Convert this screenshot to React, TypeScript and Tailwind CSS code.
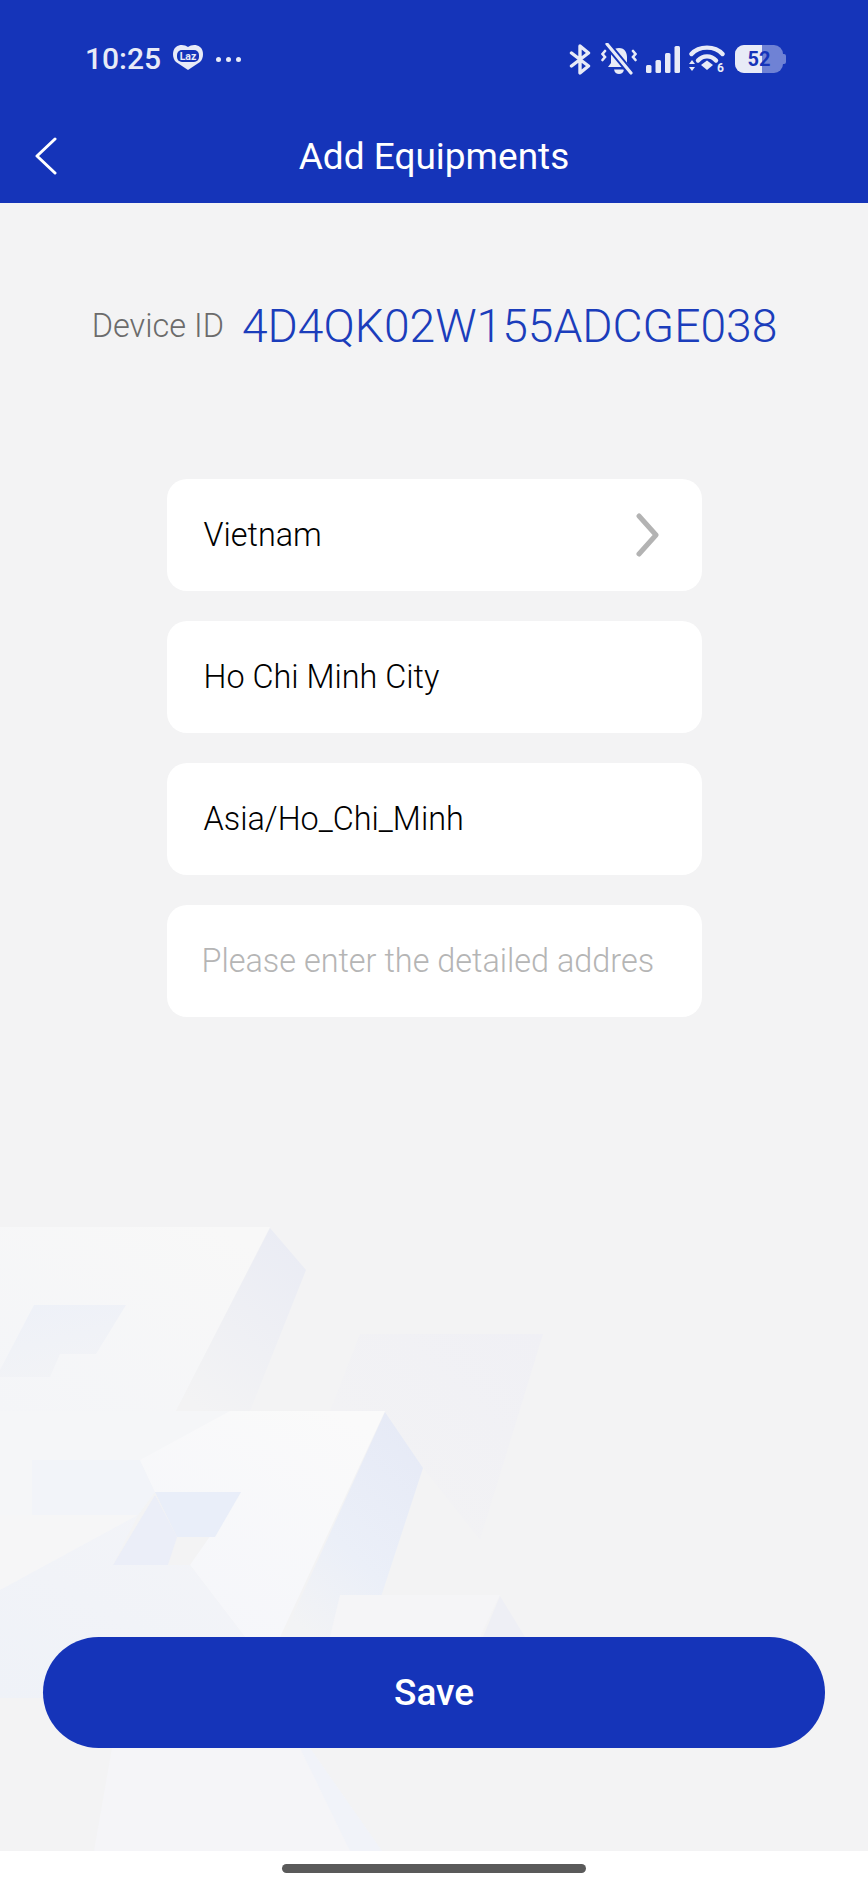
const fields = ['Vietnam', 'Ho Chi Minh City', 'Asia/Ho_Chi_Minh'];

const LazHeart = () => (
  <svg width="30" height="25" viewBox="0 0 30 25" className="ml-[12px] -mt-[4px]">
    <path
      d="M15 25 L3 17 C-1 13 -1 5 3 2 C7 -1 12 0 15 2 C18 0 23 -1 27 2 C31 5 31 13 27 17 Z"
      fill="#e8ebf7"
    />
    <rect x="4" y="5" width="22" height="12" rx="5" fill="#1534b9" />
    <text x="15" y="14.5" textAnchor="middle" fontSize="10.5" fontWeight="700" fill="#e8ebf7" fontFamily="Roboto, sans-serif">
      Laz
    </text>
  </svg>
);

const StatusIcons = () => (
  <div className="flex items-center">
    {/* bluetooth */}
    <svg width="22" height="31" viewBox="0 0 22 31" fill="none" stroke="#e8ebf7" strokeWidth="3.4" strokeLinecap="round" strokeLinejoin="round">
      <path d="M2.5 9 L19.5 22 L11 29 V2 L19.5 9 L2.5 22" />
    </svg>
    {/* muted bell */}
    <svg width="36" height="32" viewBox="0 0 36 32" className="ml-[10px]" fill="none">
      <path d="M18 5 C12 5 10 10 10 14 V20 L7 24 H29 L26 20 V14 C26 10 24 5 18 5 Z" fill="#e8ebf7" />
      <path d="M13 26.5 H23 C22.5 29.5 20.5 31 18 31 C15.5 31 13.5 29.5 13 26.5 Z" fill="#e8ebf7" />
      <path d="M6 1 L30 30" stroke="#1534b9" strokeWidth="7" />
      <path d="M6 1 L30 30" stroke="#e8ebf7" strokeWidth="3.2" strokeLinecap="round" />
      <path d="M4 8 L1.5 11 L4 14 L1.5 17" stroke="#e8ebf7" strokeWidth="2.6" strokeLinecap="round" />
      <path d="M32 8 L34.5 11 L32 14 L34.5 17" stroke="#e8ebf7" strokeWidth="2.6" strokeLinecap="round" />
    </svg>
    {/* signal bars */}
    <svg width="34" height="27" viewBox="0 0 34 27" className="ml-[9px]" fill="#e8ebf7">
      <rect x="0" y="19" width="5.5" height="8" rx="1.5" />
      <rect x="9.5" y="14" width="5.5" height="13" rx="1.5" />
      <rect x="19" y="7" width="5.5" height="20" rx="1.5" />
      <rect x="28.5" y="0" width="5.5" height="27" rx="1.5" />
    </svg>
    {/* wifi */}
    <svg width="38" height="30" viewBox="0 0 38 30" className="ml-[9px]" fill="none">
      <path d="M2.5 10 C10 1.5 26 1.5 33.5 10" stroke="#e8ebf7" strokeWidth="4.4" strokeLinecap="round" />
      <path d="M9 16.5 C14 11 22 11 27 16.5" stroke="#e8ebf7" strokeWidth="4.4" strokeLinecap="round" />
      <path d="M12 21 L18 16.5 L24 21 L18 26 Z" fill="#e8ebf7" />
      <path d="M0 20 L3 16 L6 20 Z M0 23 L3 27 L6 23 Z" fill="#e8ebf7" />
      <text x="28" y="28" fontSize="12" fontWeight="700" fill="#e8ebf7" fontFamily="Roboto, sans-serif">
        6
      </text>
    </svg>
    {/* battery */}
    <div className="relative ml-[8px] flex h-[28px] w-[48px] items-center justify-center overflow-hidden rounded-[9px] bg-[#6f82d5]">
      <div className="absolute inset-y-0 left-0 w-[27px] bg-[#e8ebf7]" />
      <span className="relative text-[20px] leading-none font-bold text-[#1534b9]">52</span>
    </div>
    <div className="h-[10px] w-[3px] rounded-r-[2px] bg-[#6f82d5]" />
  </div>
);

// faint geometric pattern behind the form
const Backdrop = () => (
  <svg className="absolute inset-0 h-full w-full" viewBox="0 0 868 1851" preserveAspectRatio="none">
    <defs>
      <linearGradient id="triA" x1="0.8" y1="0" x2="0.2" y2="1">
        <stop offset="0" stopColor="#eaecf4" />
        <stop offset="1" stopColor="#f3f3f4" />
      </linearGradient>
      <linearGradient id="triB" x1="0.8" y1="0" x2="0.2" y2="1">
        <stop offset="0" stopColor="#e6eaf6" />
        <stop offset="0.6" stopColor="#ebeff8" />
        <stop offset="1" stopColor="#f2f3f5" />
      </linearGradient>
      <linearGradient id="faint" x1="1" y1="0" x2="0" y2="1">
        <stop offset="0" stopColor="#f0f0f5" />
        <stop offset="1" stopColor="#f3f3f4" />
      </linearGradient>
      <linearGradient id="bandA" x1="0.8" y1="0" x2="0" y2="1">
        <stop offset="0" stopColor="#f8f8f8" />
        <stop offset="1" stopColor="#f4f5f8" />
      </linearGradient>
      <linearGradient id="bandB" x1="0.8" y1="0" x2="0.2" y2="1">
        <stop offset="0" stopColor="#fafafa" />
        <stop offset="1" stopColor="#f5f6fa" />
      </linearGradient>
      <linearGradient id="blue" x1="0.8" y1="0" x2="0" y2="1">
        <stop offset="0" stopColor="#f3f4f8" />
        <stop offset="1" stopColor="#eff2f8" />
      </linearGradient>
      <linearGradient id="smallTop" x1="0.2" y1="0" x2="0.6" y2="1">
        <stop offset="0" stopColor="#eef1f8" />
        <stop offset="1" stopColor="#f2f3f6" />
      </linearGradient>
    </defs>
    <polygon points="0,1227 270,1227 176,1411 0,1411" fill="url(#bandA)" />
    <polygon points="270,1228 306,1270 250,1411 176,1411" fill="url(#triA)" />
    <polygon points="360,1334 543,1334 480,1540 423,1468 385,1411 330,1411" fill="url(#faint)" />
    <polygon points="34,1305 126,1305 96,1354 60,1354 50,1377 0,1377 0,1370" fill="url(#smallTop)" />
    <polygon points="0,1411 230,1411 155,1492 138,1515 0,1515" fill="#f5f6f8" />
    <polygon points="32,1460 140,1460 155,1492 138,1515 32,1515" fill="#f2f4f9" />
    <polygon points="230,1411 385,1411 280,1637 245,1637 190,1565 241,1492 155,1492 140,1460" fill="url(#bandB)" />
    <polygon points="385,1412 423,1468 380,1600 344,1637 283,1637" fill="url(#triB)" />
    <polygon points="155,1492 241,1492 215,1537 177,1537" fill="#e9eef9" />
    <polygon points="155,1495 177,1537 168,1565 113,1565" fill="#ebeef8" />
    <polygon points="0,1515 138,1515 113,1565 190,1565 245,1637 238,1698 0,1698 0,1590" fill="url(#blue)" />
    <polygon points="0,1515 138,1515 0,1590" fill="#f6f6f7" />
    <polygon points="340,1595 500,1595 480,1637 330,1637" fill="#f5f5f7" />
    <polygon points="500,1596 525,1637 483,1637" fill="#eeeff5" />
    <polygon points="112,1748 310,1748 382,1851 94,1851" fill="#f5f5f8" />
    <polygon points="310,1748 382,1851 350,1851 300,1748" fill="#f1f3f9" />
  </svg>
);

export default function App() {
  return (
    <div className="relative flex h-[1886px] w-[868px] flex-col overflow-hidden bg-white font-['Roboto',sans-serif]">
      <div className="relative flex h-[1851px] flex-col bg-[#f3f3f4]">
        <Backdrop />

        <header className="relative flex h-[203px] flex-col bg-[#1534b9]">
          <div className="flex h-[118px] items-center justify-between pr-[82px] pl-[85px]">
            <div className="flex items-center">
              <span className="text-[30px] leading-none font-medium text-[#e8ebf7]">10:25</span>
              <LazHeart />
              <div className="ml-[13px] flex gap-[5px]">
                <span className="size-[5px] rounded-full bg-[#e8ebf7]" />
                <span className="size-[5px] rounded-full bg-[#e8ebf7]" />
                <span className="size-[5px] rounded-full bg-[#e8ebf7]" />
              </div>
            </div>
            <StatusIcons />
          </div>
          <div className="relative flex h-[76px] items-center justify-center">
            <svg width="24" height="38" viewBox="0 0 24 38" fill="none" className="absolute top-[19px] left-[34px]" stroke="#ffffff" strokeWidth="3" strokeLinecap="round" strokeLinejoin="round">
              <path d="M21 2 L3 19 L21 36" />
            </svg>
            <h1 className="text-[37px] leading-none font-normal text-white">Add Equipments</h1>
          </div>
        </header>

        <main className="relative flex flex-1 flex-col items-center">
          <div className="mt-[100px] flex items-center gap-[18px] pl-[1px]">
            <span className="text-[32.5px] leading-none font-light text-[#6b6b6b]">Device ID</span>
            <span className="text-[46.2px] leading-none font-light text-[#1b3dbb]">4D4QK02W155ADCGE038</span>
          </div>

          <div className="mt-[130px] flex w-[535px] flex-col gap-[30px]">
            {fields.map((field, i) => (
              <div key={field} className="flex h-[112px] items-center justify-between rounded-[20px] bg-white pr-[42px] pl-[37px]">
                <span className="-mt-[1px] text-[32.4px] leading-none font-[350] text-black">{field}</span>
                {i === 0 && (
                  <svg width="24" height="44" viewBox="0 0 24 44" fill="none" stroke="#b3b3b3" strokeWidth="5" strokeLinecap="round" strokeLinejoin="round">
                    <path d="M3 3 L20 22 L3 41" />
                  </svg>
                )}
              </div>
            ))}
            <div className="flex h-[112px] items-center rounded-[20px] bg-white pl-[35px]">
              <span className="-mt-[1px] text-[32.4px] leading-none font-light whitespace-nowrap text-[#b5b5b5]">Please enter the detailed addres</span>
            </div>
          </div>

          <button type="button" className="mt-auto mb-[103px] flex h-[111px] w-[782px] items-center justify-center rounded-full bg-[#1534b9] text-[37px] font-medium text-white">
            Save
          </button>
        </main>
      </div>

      <div className="flex h-[35px] justify-center pt-[13px]">
        <div className="h-[9px] w-[304px] rounded-full bg-[#5a5a5a]" />
      </div>
    </div>
  );
}
